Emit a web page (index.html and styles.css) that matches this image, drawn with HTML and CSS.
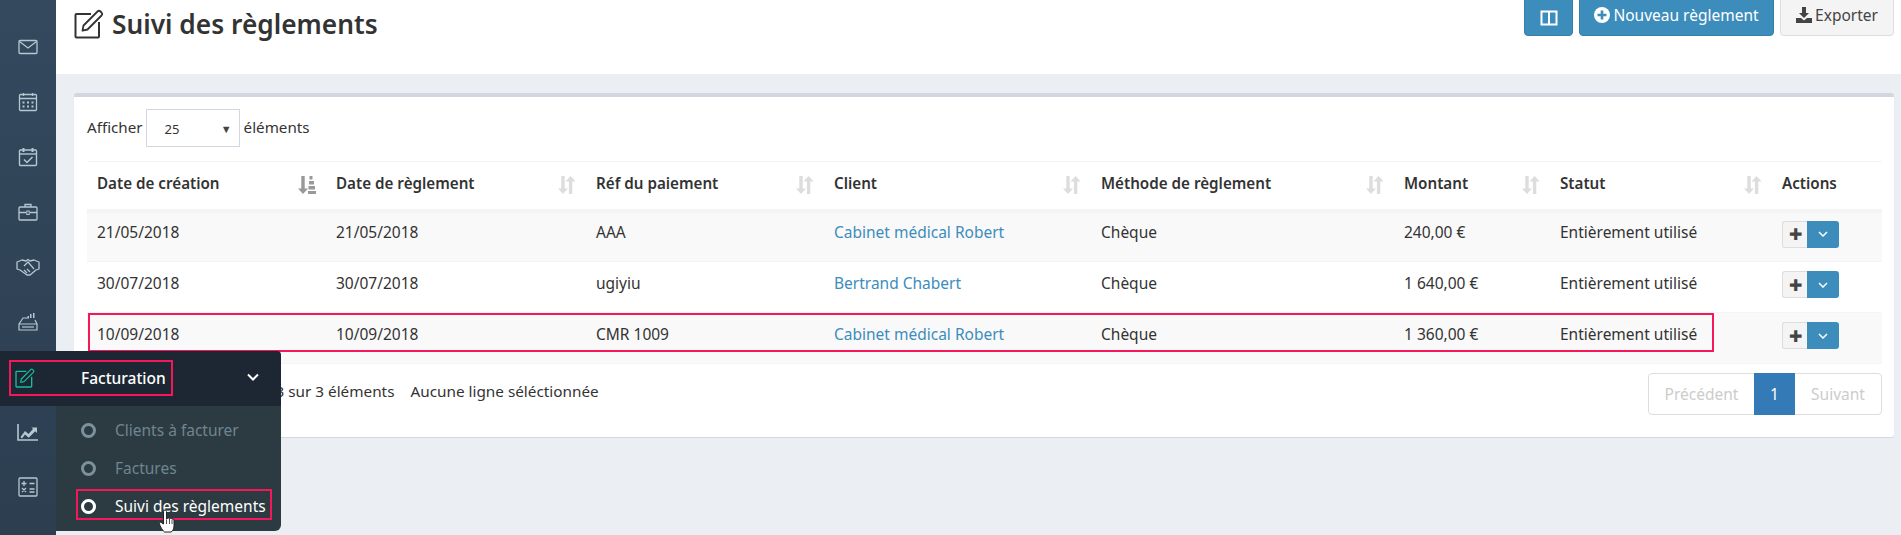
FILE: index.html
```html
<!DOCTYPE html>
<html lang="fr">
<head>
<meta charset="utf-8">
<title>Suivi des règlements</title>
<link rel="stylesheet" href="styles.css">
</head>
<body>
<svg class="defs" width="0" height="0" aria-hidden="true">
  <symbol id="i-pen" viewBox="0 0 30 30">
    <path d="M17 5H2.500a1 1 0 0 0-1 1v21.500a1 1 0 0 0 1 1H24a1 1 0 0 0 1-1V13" fill="none" stroke="currentColor" stroke-width="2"/>
    <path d="M9.500 16.500 23.500 2.500a2.200 2.200 0 0 1 3 0l1 1a2.200 2.200 0 0 1 0 3l-14 14-5 1.200z" fill="none" stroke="currentColor" stroke-width="1.800" stroke-linejoin="round"/>
  </symbol>
  <symbol id="i-sort" viewBox="0 0 18 18">
    <path d="M3.300 0h3.400v12.500H10L5 18 0 12.500h3.300z M14.300 18h-3.400V5.500H7.500L12.600 0l5 5.500h-3.300z" fill="currentColor"/>
  </symbol>
  <symbol id="i-sort-amount" viewBox="0 0 18 18">
    <path d="M3.300 0h3.400v12.500H10L5 18 0 12.500h3.300z" fill="currentColor"/>
    <path d="M11.500 0h3v3.500h-3z M11 5h5v3.500h-5z M10.500 10h6.500v3.500h-6.500z M10 15h8v3h-8z" fill="currentColor"/>
  </symbol>
</svg>

<aside class="sidebar">
  <nav class="rail">
    <span class="rail-item"><svg class="rail-icon" viewBox="0 0 20 20"><rect x="1.500" y="3" width="17" height="14" fill="none" stroke="currentColor" stroke-width="1.300"/></svg></span>
    <span class="rail-item"><svg class="rail-icon" viewBox="0 0 20 20"><rect x="1" y="3.500" width="18" height="13" rx="1" fill="none" stroke="currentColor" stroke-width="1.300"/><path d="m1.500 4.500 8.500 6.500 8.500-6.500" fill="none" stroke="currentColor" stroke-width="1.300"/></svg></span>
    <span class="rail-item"><svg class="rail-icon" viewBox="0 0 20 20"><rect x="1.500" y="2.500" width="17" height="16" rx="1" fill="none" stroke="currentColor" stroke-width="1.300"/><path d="M1.500 6.500h17M5.500 1v3M14.500 1v3" stroke="currentColor" stroke-width="1.300"/><path d="M4.500 9.500h2v2h-2zM9 9.500h2v2H9zM13.500 9.500h2v2h-2zM4.500 13.500h2v2h-2zM9 13.500h2v2H9zM13.500 13.500h2v2h-2z" fill="currentColor"/></svg></span>
    <span class="rail-item"><svg class="rail-icon" viewBox="0 0 20 20"><rect x="1.500" y="3" width="17" height="15.500" rx="1" fill="none" stroke="currentColor" stroke-width="1.400"/><path d="M1.500 7h17" stroke="currentColor" stroke-width="1.400"/><path d="M5.500 1v4M14.500 1v4" stroke="currentColor" stroke-width="2"/><path d="m6 12.500 3 3 5.500-5.500" fill="none" stroke="currentColor" stroke-width="1.500"/></svg></span>
    <span class="rail-item"><svg class="rail-icon" viewBox="0 0 20 20"><rect x="1" y="5" width="18" height="13" rx="1" fill="none" stroke="currentColor" stroke-width="1.300"/><path d="M7 5V2.500h6V5M1 10.500h7M12 10.500h7" fill="none" stroke="currentColor" stroke-width="1.300"/><rect x="8.800" y="9" width="2.400" height="3.500" fill="none" stroke="currentColor"/></svg></span>
    <span class="rail-item"><svg class="rail-icon rail-icon-wide" viewBox="0 0 24 20"><path d="M1 5l5-2 4 1 2-1.500 2 1.500 4-1 5 2v7l-3 1-6 5h-3l-7-5-3-1z" fill="none" stroke="currentColor" stroke-width="1.300" stroke-linejoin="round"/><path d="m8 9 4-4 6 7M11 16l-3-3M14 15l-3-3" fill="none" stroke="currentColor" stroke-width="1.200"/></svg></span>
    <span class="rail-item"><svg class="rail-icon" viewBox="0 0 20 20"><path d="M1 12 5 6h6M1 12v6h18v-6zM19 12l-2-4" fill="none" stroke="currentColor" stroke-width="1.200"/><path d="M4 15h12" stroke="currentColor" stroke-width="1.200"/><path d="M12 2h1.500v4H12zM15 1h1.500v5H15zM9.500 4H11v2H9.500z" fill="currentColor"/></svg></span>
    <span class="rail-item"></span>
    <span class="rail-item"><svg class="rail-icon rail-icon-wide" viewBox="0 0 22 20"><path d="M1 2v16h20" fill="none" stroke="currentColor" stroke-width="1.600"/><path d="M3.500 15 8 9l3.500 3L16 7l-1.500-1.500H20V11l-1.800-1.800-6.500 6.500L8 12.500 5 16.500z" fill="currentColor"/></svg></span>
    <span class="rail-item"><svg class="rail-icon" viewBox="0 0 20 20"><rect x="1" y="1" width="18" height="18" rx="1" fill="none" stroke="currentColor" stroke-width="1.300"/><path d="M3.500 6.500h5M6 4v5M11.500 6.500h5M11.500 12h5M11.500 15h5M4 11l4 4M8 11l-4 4" stroke="currentColor" stroke-width="1.300" fill="none"/></svg></span>
  </nav>

  <div class="flyout">
    <div class="flyout-head">
      <svg class="flyout-icon"><use href="#i-pen"/></svg>
      <span class="flyout-title">Facturation</span>
      <svg class="flyout-chevron" viewBox="0 0 12 8"><path d="m1 1.500 5 5 5-5" fill="none" stroke="currentColor" stroke-width="2"/></svg>
    </div>
    <ul class="flyout-list">
      <li class="flyout-item"><span class="ring"></span>Clients à facturer</li>
      <li class="flyout-item"><span class="ring"></span>Factures</li>
      <li class="flyout-item is-active"><span class="ring"></span>Suivi des règlements</li>
    </ul>
    <span class="mark mark-head"></span>
    <span class="mark mark-item"></span>
    <svg class="hand" viewBox="0 0 16 24"><path d="M5 2.500a1.500 1.500 0 0 1 3 0V10l1-.5a1.300 1.300 0 0 1 2 .3l.7-.3a1.300 1.300 0 0 1 1.800.6l.5-.1A1.300 1.300 0 0 1 15.500 11v6c0 3-1.500 5.500-3 6H6c-1.500-1-5-6-5-8.500 0-1.500 1.500-1.500 2.500-.5L5 15z" fill="#fff" stroke="#222" stroke-width="1"/><path d="M8 10.500V15M11 10v5M13.500 10.500V15" stroke="#222" stroke-width=".8"/></svg>
  </div>
</aside>

<div class="main">
  <header class="page-head">
    <h1 class="page-title"><svg class="page-title-icon"><use href="#i-pen"/></svg>Suivi des règlements</h1>
    <div class="page-actions">
      <button class="btn btn-blue btn-split"><svg class="split-icon" viewBox="0 0 18 16"><path d="M1.500 1.500h15v13h-15z M9 1.500v13" fill="none" stroke="currentColor" stroke-width="2"/></svg></button>
      <button class="btn btn-blue btn-new"><svg class="btn-icon" viewBox="0 0 16 16"><circle cx="8" cy="8" r="8" fill="currentColor"/><path d="M8 3.500v9M3.500 8h9" stroke="#3c8dbc" stroke-width="2.600"/></svg>Nouveau règlement</button>
      <button class="btn btn-light"><svg class="btn-icon" viewBox="0 0 16 16"><path d="M6 0h4v6h3l-5 5-5-5h3zM0 11h5l3 2.500 3-2.500h5v5H0z" fill="currentColor"/></svg>Exporter</button>
    </div>
  </header>

  <section class="content">
    <div class="panel">
      <div class="length">Afficher <span class="select"><span>25</span><i class="select-arrow">▼</i></span> éléments</div>
      <table class="grid">
        <thead>
          <tr>
            <th class="c1">Date de création<svg class="sort sort-on"><use href="#i-sort-amount"/></svg></th>
            <th class="c2">Date de règlement<svg class="sort"><use href="#i-sort"/></svg></th>
            <th class="c3">Réf du paiement<svg class="sort"><use href="#i-sort"/></svg></th>
            <th class="c4">Client<svg class="sort"><use href="#i-sort"/></svg></th>
            <th class="c5">Méthode de règlement<svg class="sort"><use href="#i-sort"/></svg></th>
            <th class="c6">Montant<svg class="sort"><use href="#i-sort"/></svg></th>
            <th class="c7">Statut<svg class="sort"><use href="#i-sort"/></svg></th>
            <th class="c8">Actions</th>
          </tr>
        </thead>
        <tbody>
          <tr>
            <td>21/05/2018</td><td>21/05/2018</td><td>AAA</td><td><a class="link">Cabinet médical Robert</a></td><td>Chèque</td><td>240,00 €</td><td>Entièrement utilisé</td>
            <td><span class="act"><span class="act-plus">✚</span><span class="act-more"><svg viewBox="0 0 10 6"><path d="m1 1 4 4 4-4" fill="none" stroke="currentColor" stroke-width="1.500"/></svg></span></span></td>
          </tr>
          <tr>
            <td>30/07/2018</td><td>30/07/2018</td><td>ugiyiu</td><td><a class="link">Bertrand Chabert</a></td><td>Chèque</td><td>1 640,00 €</td><td>Entièrement utilisé</td>
            <td><span class="act"><span class="act-plus">✚</span><span class="act-more"><svg viewBox="0 0 10 6"><path d="m1 1 4 4 4-4" fill="none" stroke="currentColor" stroke-width="1.500"/></svg></span></span></td>
          </tr>
          <tr>
            <td>10/09/2018</td><td>10/09/2018</td><td>CMR 1009</td><td><a class="link">Cabinet médical Robert</a></td><td>Chèque</td><td>1 360,00 €</td><td>Entièrement utilisé</td>
            <td><span class="act"><span class="act-plus">✚</span><span class="act-more"><svg viewBox="0 0 10 6"><path d="m1 1 4 4 4-4" fill="none" stroke="currentColor" stroke-width="1.500"/></svg></span></span></td>
          </tr>
        </tbody>
      </table>
      <span class="mark mark-row"></span>
      <div class="foot">
        <div class="foot-info"><span>Affichage de l'élément 1 à 3 sur 3 éléments</span><span>Aucune ligne séléctionnée</span></div>
        <div class="pager"><span class="page-link page-prev">Précédent</span><span class="page-link is-current">1</span><span class="page-link page-next">Suivant</span></div>
      </div>
    </div>
  </section>
</div>
</body>
</html>
```

FILE: styles.css
```css
* { box-sizing: border-box; }
html, body { margin: 0; height: 535px; overflow: hidden; }
body {
  display: flex;
  font-family: "Noto Sans", sans-serif;
  font-size: 15.500px;
  color: #333;
  background: #ebeef3;
}
.defs { position: absolute; }

.sidebar {
  width: 56px;
  flex: none;
  background: linear-gradient(#34495e, #2c3e50);
  position: relative;
  z-index: 2;
}
.rail { display: flex; flex-direction: column; margin-top: -36px; }
.rail-item { height: 55px; flex: none; display: flex; align-items: center; justify-content: center; color: #b4c8d2; }
.rail-icon { width: 20px; height: 20px; }
.rail-icon-wide { width: 24px; }

.flyout { position: absolute; left: 0; top: 351px; width: 281px; height: 180px; }
.flyout-head {
  height: 55px;
  background: #1c2733;
  border-radius: 0 4px 0 0;
  display: flex;
  align-items: center;
  color: #fff;
}
.flyout-icon { width: 20px; height: 20px; margin: -2px 0 0 15px; color: #1abc9c; }
.flyout-title { margin-left: 46px; font-weight: 500; font-size: 15.500px; margin-top: -2px; }
.flyout-chevron { width: 12px; height: 8px; margin-left: 81px; margin-top: -4px; }
.flyout-list {
  list-style: none;
  margin: 0 0 0 56px;
  padding: 5px 0 0;
  height: 125px;
  background: #2c3b41;
  border-radius: 0 0 6px 0;
}
.flyout-item {
  height: 38px;
  display: flex;
  align-items: center;
  font-size: 15.500px;
  color: #6f8590;
  padding-left: 25px;
}
.flyout-item.is-active { color: #fff; }
.ring { width: 15px; height: 15px; border: 3px solid #7b919c; border-radius: 50%; margin-right: 19px; flex: none; }
.is-active .ring { border-color: #fff; }

.mark { position: absolute; border: 2px solid #f5175a; pointer-events: none; }
.mark-head { left: 9px; top: 9px; width: 164px; height: 36px; }
.mark-item { left: 76px; top: 138px; width: 196px; height: 31px; }
.mark-row { left: 14px; top: 216px; width: 1626px; height: 39px; }
.hand { position: absolute; left: 158px; top: 158px; width: 17px; height: 24px; }

.main { flex: 1; min-width: 0; display: flex; flex-direction: column; }
.page-head {
  height: 74px;
  background: #fff;
  display: flex;
  justify-content: space-between;
  align-items: flex-start;
  padding: 0 7px 0 18px;
}
.page-title {
  margin: 9px 0 0;
  display: flex;
  align-items: center;
  font-size: 26.300px;
  line-height: 30px;
  font-weight: 600;
  color: #333;
}
.page-title-icon { width: 30px; height: 30px; margin: -1px 8px 0 0; color: #333; }
.page-actions { display: flex; gap: 6px; margin-top: -6px; }
.btn {
  height: 42px;
  border-radius: 4px;
  font: inherit;
  display: flex;
  align-items: center;
  justify-content: center;
  padding: 6px 0 0;
  border: 1px solid;
}
.btn-blue { background: #3c8dbc; border-color: #367fa9; color: #fff; }
.btn-light { background: #f4f4f4; border-color: #ddd; color: #444; width: 114px; }
.btn-split { width: 49px; }
.btn-new { width: 195px; }
.split-icon { width: 18px; height: 16px; }
.btn-icon { width: 16px; height: 16px; margin-right: 3px; }
.btn-new, .btn-light { padding: 0 0 5px; align-items: flex-end; line-height: 30px; }
.btn-new .btn-icon, .btn-light .btn-icon { margin-bottom: 7px; }

.content { flex: 1; padding: 19px 7px 0 18px; }
.panel {
  position: relative;
  height: 344px;
  background: #fff;
  border-top: 4px solid #d2d6de;
  border-radius: 3px;
  box-shadow: 0 1px 1px rgba(0, 0, 0, .1);
  padding: 12px 12px 0 13px;
}
.length { height: 52px; display: flex; align-items: flex-start; line-height: 36px; font-size: 15.200px; }
.select {
  width: 94px;
  height: 38px;
  border: 1px solid #d2d6de;
  margin: 0 4px 0 3px;
  padding: 0 0 0 18px;
  display: flex;
  justify-content: space-between;
  font-size: 13px;
  line-height: 38px;
}
.select-arrow { font-style: normal; font-size: 11px; margin-right: 7px; color: #444; }

.grid { width: 1795px; border-collapse: collapse; table-layout: fixed; }
.grid th {
  position: relative;
  height: 49px;
  padding: 0 10px 4px;
  text-align: left;
  font-size: 15.200px;
  font-weight: 600;
  border-top: 1px solid #f4f4f4;
  border-bottom: 4px solid #f4f4f4;
}
.grid td { height: 51px; padding: 0 10px 9px; border-bottom: 1px solid #f4f4f4; }
.grid tbody tr:nth-child(odd) td { background: #f9f9f9; }
.c1 { width: 239px; }
.c2 { width: 260px; }
.c3 { width: 238px; }
.c4 { width: 267px; }
.c5 { width: 303px; }
.c6 { width: 156px; }
.c7 { width: 222px; }
.c8 { width: 110px; }
.sort {
  position: absolute;
  right: 10px;
  top: 14px;
  width: 18px;
  height: 18px;
  color: #ddd;
}
.sort-on { color: #999; }
.link { color: #3c8dbc; }
.act { display: inline-flex; vertical-align: middle; height: 27px; margin-top: 4px; }
.act-plus {
  width: 25px;
  background: #f4f4f4;
  border: 1px solid #ddd;
  border-right: 0;
  border-radius: 3px 0 0 3px;
  display: flex;
  align-items: center;
  justify-content: center;
  font-size: 16px;
  color: #444;
}
.act-more {
  width: 32px;
  background: #3c8dbc;
  border-radius: 0 3px 3px 0;
  display: flex;
  align-items: center;
  justify-content: center;
  color: #fff;
}
.act-more svg { width: 10px; height: 6px; }

.foot { display: flex; justify-content: space-between; align-items: flex-start; margin-top: 9px; }
.foot-info { display: flex; gap: 16px; line-height: 36px; font-size: 15.300px; }
.pager { display: flex; height: 42px; border: 1px solid #ddd; border-radius: 4px; }
.page-link { display: flex; align-items: center; justify-content: center; color: #ccc; }
.page-prev { width: 105px; }
.page-next { width: 86px; }
.page-link.is-current { background: #337ab7; color: #fff; margin: -1px 0; height: 42px; width: 41px; }
```
